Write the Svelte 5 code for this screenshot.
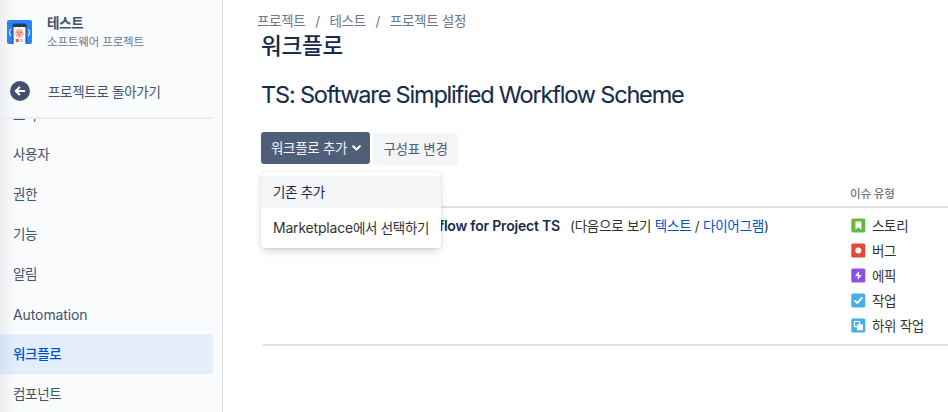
<script>
  const nav = ['요약', '사용자', '권한', '기능', '알림', 'Automation', '워크플로', '컴포넌트'];
  const crumbs = ['프로젝트', '테스트', '프로젝트 설정'];
  const types = [
    { name: '스토리', kind: 'story', color: '#63ba3c' },
    { name: '버그', kind: 'bug', color: '#e5493a' },
    { name: '에픽', kind: 'epic', color: '#904ee2' },
    { name: '작업', kind: 'task', color: '#4bade8' },
    { name: '하위 작업', kind: 'subtask', color: '#4bade8' }
  ];
</script>

<div class="app">
  <aside>
    <header>
      <div class="project">
        <svg class="avatar" width="25" height="24" viewBox="0 0 25 24">
          <rect width="25" height="24" rx="2" fill="#2684ff" />
          <path d="M5.500 24V5.500a2 2 0 0 1 2-2h10a2 2 0 0 1 2 2V24z" fill="#253858" />
          <path d="M6.500 7h12v17h-12z" fill="#fafbfc" />
          <path d="M3.800 9Q1.200 12.500 3.800 16M21.200 9q2.600 3.500 0 7" fill="none" stroke="#deebff" stroke-width="1.100" />
          <circle cx="12.300" cy="13.300" r="4.500" fill="#ffbdad" />
          <circle cx="10.700" cy="12.300" r=".7" fill="#bf2600" />
          <circle cx="13.900" cy="12.300" r=".7" fill="#bf2600" />
          <path d="M10.300 14.300q2 2.200 4 0z" fill="#ff5630" />
          <rect x="8.800" y="19" width="3" height="3" fill="#ff5630" />
          <rect x="13" y="19" width="3" height="3" fill="#b3d4ff" />
        </svg>
        <div class="names">
          <strong>테스트</strong>
          <span>소프트웨어 프로젝트</span>
        </div>
      </div>
      <div class="back">
        <svg width="20" height="20" viewBox="0 0 20 20">
          <circle cx="10" cy="10" r="10" fill="#42526e" />
          <path d="M14.300 10H6M9.300 6.500 5.800 10l3.500 3.500" fill="none" stroke="#fff" stroke-width="2" stroke-linecap="round" stroke-linejoin="round" />
        </svg>
        <span>프로젝트로 돌아가기</span>
      </div>
    </header>
    <div class="scroller">
      <nav>
        {#each nav as item}
          <div class="item" class:selected={item === '워크플로'} class:latin={item === 'Automation'}>{item}</div>
        {/each}
      </nav>
    </div>
  </aside>

  <main>
    <div class="crumbs">
      {#each crumbs as crumb, i}
        {#if i}<i>/</i>{/if}<span>{crumb}</span>
      {/each}
    </div>
    <h1>워크플로</h1>
    <h2>TS: Software Simplified Workflow Scheme</h2>
    <div class="actions">
      <div class="anchor">
        <button class="primary">
          <span>워크플로 추가</span>
          <svg width="9" height="6" viewBox="0 0 9 6"><path d="M1.200 1.200 4.500 4.500l3.300-3.300" fill="none" stroke="#fff" stroke-width="2" stroke-linecap="round" stroke-linejoin="round" /></svg>
        </button>
        <div class="menu">
          <div class="option active">기존 추가</div>
          <div class="option"><span class="latin">Marketplace</span>에서 선택하기</div>
        </div>
      </div>
      <button class="secondary"><span>구성표 변경</span></button>
    </div>
    <div class="table">
      <div class="thead">이슈 유형</div>
      <div class="row">
        <div class="workflow">
          <strong>Software Simplified Workflow for Project TS</strong>
          <span class="views">(다음으로 보기 <a href="#text">텍스트</a> / <a href="#diagram">다이어그램</a>)</span>
        </div>
        <ul>
          {#each types as t}
            <li>
              <svg width="15" height="15" viewBox="0 0 15 15">
                <rect x=".3" y=".5" width="14" height="14" rx="1.600" fill={t.color} />
                {#if t.kind === 'story'}
                  <path d="M4.500 3.500h5.800v8.300L7.400 9.200l-2.900 2.600z" fill="#fff" />
                {:else if t.kind === 'bug'}
                  <circle cx="7.300" cy="7.500" r="3" fill="#fff" />
                {:else if t.kind === 'epic'}
                  <path d="M8 3 4 8h2.700v4l4-5H8z" fill="#fff" />
                {:else if t.kind === 'task'}
                  <path d="m4 7.900 2.300 2.300 4.500-5.300" fill="none" stroke="#fff" stroke-width="1.800" stroke-linecap="round" stroke-linejoin="round" />
                {:else}
                  <rect x="3.400" y="3.500" width="5.200" height="5.200" rx=".5" fill="none" stroke="#fff" stroke-width="1.200" />
                  <rect x="6" y="6.200" width="6" height="6" rx=".8" fill="#fff" />
                {/if}
              </svg>
              <span>{t.name}</span>
            </li>
          {/each}
        </ul>
      </div>
    </div>
  </main>
</div>

<style>
  :global(body) { margin: 0; overflow: hidden; }
  .app {
    display: flex;
    width: 948px;
    height: 412px;
    overflow: hidden;
    background: #fff;
    color: #333;
    font-family: Inter, 'Noto Sans CJK KR', sans-serif;
    font-size: 13.500px;
    letter-spacing: -0.300px;
    white-space: nowrap;
  }
  aside {
    box-sizing: border-box;
    display: flex;
    flex-direction: column;
    flex: none;
    width: 223px;
    height: 412px;
    border-right: 1px solid #e0e1e5;
    background: linear-gradient(90deg, rgba(9, 30, 66, .06), rgba(9, 30, 66, 0) 16px), #fafbfc;
    color: #42526e;
  }
  header {
    box-sizing: border-box;
    width: 213px;
    height: 119px;
    flex: none;
    border-bottom: 2px solid #ebecf0;
  }
  .project { display: flex; height: 65px; padding-left: 7px; }
  .avatar { margin-top: 20px; }
  .names { display: flex; flex-direction: column; margin: 14px 0 0 15px; }
  .names strong { font-size: 13.500px; line-height: 19px; font-weight: 600; }
  .names span { font-size: 11.500px; line-height: 18px; color: #6b778c; letter-spacing: -.150px; }
  .back { display: flex; align-items: center; height: 52px; padding-left: 10px; gap: 18px; }
  .back span { margin-top: -1px; }
  .scroller { flex: 1; overflow: hidden; }
  nav { margin-top: -25px; width: 213px; }
  .item { height: 40px; line-height: 40px; padding-left: 13px; border-radius: 0 3px 3px 0; }
  .item:first-child { line-height: 43px; }
  .item.latin { letter-spacing: -.100px; font-size: 14px; line-height: 42px; }
  .item.selected { background: rgba(0, 101, 255, .09); color: #0052cc; font-weight: 500; }
  main { flex: 1; min-width: 0; padding: 11px 0 0 34px; }
  .crumbs { display: flex; height: 20px; line-height: 20px; color: #6b778c; }
  .crumbs i { font-style: normal; width: 24px; text-align: center; }
  h1, h2 { margin: 0 0 0 4px; color: #172b4d; font-weight: 500; }
  h1 { height: 28px; line-height: 29px; font-size: 22.500px; letter-spacing: -.200px; }
  h2 { margin-top: 20px; height: 30px; line-height: 31px; font-size: 23.500px; font-weight: 400; letter-spacing: -1.180px; -webkit-text-stroke: .1px #172b4d; }
  .actions { display: flex; gap: 3px; margin: 23px 0 0 4px; height: 33px; }
  .anchor { position: relative; height: 32px; }
  button { box-sizing: border-box; border: 0; border-radius: 3px; height: 32px; padding: 0; font: inherit; letter-spacing: inherit; }
  button span { display: block; padding-bottom: 3px; }
  .primary { display: flex; align-items: center; gap: 5px; width: 109px; padding-left: 10px; background: #505f79; color: #f4f5f7; }
  .secondary { width: 85px; margin-top: 1px; background: #f4f5f7; color: #505f79; }
  .menu {
    position: absolute;
    z-index: 2;
    top: 40px;
    left: 0;
    box-sizing: border-box;
    width: 180px;
    height: 76px;
    padding-top: 4px;
    border-radius: 3px;
    background: #fff;
    box-shadow: 0 4px 8px -2px rgba(9, 30, 66, .25), 0 0 1px rgba(9, 30, 66, .31);
  }
  .option { height: 40px; line-height: 40px; padding-left: 12px; color: #333; }
  .option .latin { font-size: 14px; letter-spacing: -.200px; }
  .option.active { height: 32px; line-height: 32px; background: #f4f5f7; color: #172b4d; }
  .table { margin: 19px 0 0 6px; }
  .thead { box-sizing: border-box; height: 24px; line-height: 20px; padding-left: 587px; border-bottom: 2px solid #dfe1e6; font-size: 11.500px; letter-spacing: -.150px; color: #6b778c; font-weight: 500; }
  .row { display: flex; height: 136px; border-bottom: 2px solid #dfe1e6; }
  .workflow { display: flex; width: 588px; height: 36px; line-height: 36px; flex: none; }
  .workflow strong { width: 297px; color: #172b4d; font-size: 14px; font-weight: 600; display: flex; justify-content: flex-end; letter-spacing: -.200px; }
  .views { margin-left: 10px; letter-spacing: -.250px; }
  a { color: #0052cc; text-decoration: none; }
  ul { list-style: none; margin: 5px 0 0; padding: 0; }
  li { display: flex; align-items: center; gap: 6px; height: 25px; }
  li span { margin-top: -2px; }
</style>
